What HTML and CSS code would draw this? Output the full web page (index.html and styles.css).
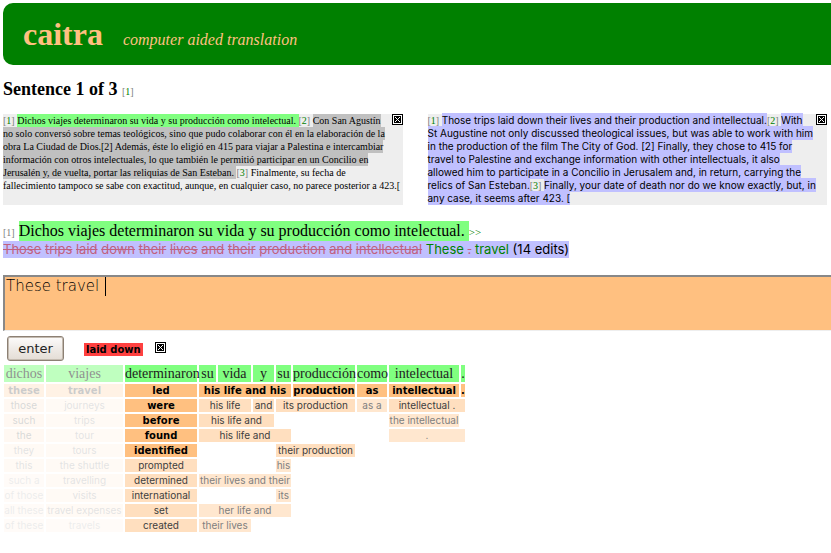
FILE: index.html
```html
<!DOCTYPE html>
<html lang="en">
<head>
<meta charset="utf-8">
<title>caitra - computer aided translation</title>
<link rel="stylesheet" href="styles.css">
</head>
<body>
<svg class="defs" aria-hidden="true">
  <symbol id="close" viewBox="0 0 11 11">
    <rect width="11" height="11" fill="#000"/>
    <rect x="1" y="1" width="9" height="9" fill="#fff"/>
    <rect x="2" y="2" width="7" height="7" fill="#000"/>
    <path d="M3 3h1v1h1v1h1v-1h1v-1h1v1h-1v1h-1v1h1v1h1v1h-1v-1h-1v-1h-1v1h-1v1h-1v-1h1v-1h1v-1h-1v-1h-1z" fill="#fff"/>
  </symbol>
</svg>
<header class="banner">
  <h1>caitra</h1>
  <p>computer aided translation</p>
</header>
<main>
  <h2>Sentence 1 of 3 <small>[<a href="#s1">1</a>]</small></h2>

  <div class="context">
    <section class="pane source">
      <button class="close" aria-label="Close source"><svg><use href="#close"/></svg></button>
      <p><span class="ref">[<a href="#s1">1</a>] </span><span class="current">Dichos viajes determinaron su vida y su producción como intelectual. </span><span class="ref"> [<a href="#s2">2</a>] </span><span class="other">Con San Agustín<br>no solo conversó sobre temas teológicos, sino que pudo colaborar con él en la elaboración de la<br>obra La Ciudad de Dios.[2] Además, éste lo eligió en 415 para viajar a Palestina e intercambiar<br>información con otros intelectuales, lo que también le permitió participar en un Concilio en<br>Jerusalén y, de vuelta, portar las reliquias de San Esteban. </span><span class="ref"> [<a href="#s3">3</a>] </span>Finalmente, su fecha de<br>fallecimiento tampoco se sabe con exactitud, aunque, en cualquier caso, no parece posterior a 423.[</p>
    </section>
    <section class="pane target">
      <button class="close" aria-label="Close translation"><svg><use href="#close"/></svg></button>
      <p><span class="ref">[<a href="#s1">1</a>] </span><span class="draft">Those trips laid down their lives and their production and intellectual.</span><span class="ref">[<a href="#s2">2</a>] </span><span class="draft">With<br>St Augustine not only discussed theological issues, but was able to work with him<br>in the production of the film The City of God. [2] Finally, they chose to 415 for<br>travel to Palestine and exchange information with other intellectuals, it also<br>allowed him to participate in a Concilio in Jerusalem and, in return, carrying the<br>relics of San Esteban.</span><span class="ref">[<a href="#s3">3</a>] </span><span class="draft">Finally, your date of death nor do we know exactly, but, in<br>any case, it seems after 423. [</span></p>
    </section>
  </div>

  <p class="sentence"><small>[1]</small> <span>Dichos viajes determinaron su vida y su producción como intelectual. </span><a href="#s2">&gt;&gt;</a></p>
  <p class="edits"><span><del>Those</del> <del>trips</del> <del>laid</del> <del>down</del> <del>their</del> <del>lives</del> <del>and</del> <del>their</del> <del>production</del> <del>and</del> <del>intellectual</del> <ins>These</ins> <del>.</del> <ins>travel</ins> (14 edits)</span></p>

  <div class="entry">
    <textarea aria-label="Translation" spellcheck="false">These travel </textarea>
    <i class="caret"></i>
  </div>

  <div class="actions">
    <button class="enter">enter</button>
    <mark>laid down</mark>
    <button class="close" aria-label="Dismiss suggestion"><svg><use href="#close"/></svg></button>
  </div>

  <table class="options">
    <colgroup><col class="c40"><col class="c77"><col class="c72"><col class="c17"><col class="c33"><col class="c21"><col class="c15"><col class="c62"><col class="c30"><col class="c70"><col class="c4"></colgroup>
    <thead>
      <tr><th class="done">dichos</th><th class="done">viajes</th><th>determinaron</th><th>su</th><th>vida</th><th>y</th><th>su</th><th>producción</th><th>como</th><th>intelectual</th><th>.</th></tr>
    </thead>
    <tbody>
      <tr><td class="best f1">these</td><td class="best f1">travel</td><td class="best">led</td><td class="best" colspan="4">his life and his</td><td class="best">production</td><td class="best">as</td><td class="best">intellectual</td><td class="best">.</td></tr>
      <tr><td class="good f1">those</td><td class="good f2">journeys</td><td class="best">were</td><td class="good" colspan="2">his life</td><td class="good">and</td><td class="good" colspan="2">its production</td><td class="fair">as a</td><td class="good" colspan="2">intellectual .</td></tr>
      <tr><td class="good f1">such</td><td class="good f2">trips</td><td class="best">before</td><td class="good" colspan="3">his life and</td><td colspan="3"></td><td class="fair">the intellectual</td><td></td></tr>
      <tr><td class="good f1">the</td><td class="good f2">tour</td><td class="best">found</td><td class="good" colspan="4">his life and</td><td colspan="2"></td><td class="fair" colspan="2">.</td></tr>
      <tr><td class="good f2">they</td><td class="good f2">tours</td><td class="best">identified</td><td colspan="3"></td><td class="good" colspan="2">their production</td><td colspan="3"></td></tr>
      <tr><td class="good f2">this</td><td class="good f2">the shuttle</td><td class="good">prompted</td><td colspan="3"></td><td class="fair">his</td><td colspan="4"></td></tr>
      <tr><td class="fair f2">such a</td><td class="good f2">travelling</td><td class="good">determined</td><td class="fair" colspan="4">their lives and their</td><td colspan="4"></td></tr>
      <tr><td class="fair f2">of those</td><td class="good f2">visits</td><td class="good">international</td><td colspan="3"></td><td class="fair">its</td><td colspan="4"></td></tr>
      <tr><td class="fair f2">all these</td><td class="good f2">travel expenses</td><td class="good">set</td><td class="fair" colspan="4">her life and</td><td colspan="4"></td></tr>
      <tr><td class="fair f2">of these</td><td class="fair f2">travels</td><td class="good">created</td><td class="fair" colspan="2">their lives</td><td colspan="6"></td></tr>
    </tbody>
  </table>
</main>
</body>
</html>
```

FILE: styles.css
```css
* { box-sizing: border-box; }
body {
  margin: 3px 0 0 3px;
  background: #fff;
  color: #000;
  font-family: "Liberation Serif", serif;
}
h1, h2, p { margin: 0; }
a { color: #008000; text-decoration: none; }
small, .ref { color: #808080; }
.defs { display: none; }

.banner {
  display: flex;
  align-items: baseline;
  gap: 20px;
  padding: 12px 20px;
  height: 62px;
  background: #008000;
  border-radius: 10px 0 0 10px;
  color: #ffc080;
}
.banner h1 { font-size: 32px; line-height: 38px; }
.banner p { font-size: 16px; font-style: italic; }

h2 { margin-top: 14px; font-size: 18px; line-height: 20px; }
h2 small { font-size: 10px; font-weight: normal; }

.context {
  display: grid;
  grid-template-columns: minmax(0, 1fr) minmax(0, 1fr);
  gap: 25px;
  margin: 12px 4px 0 0;
}
.pane {
  position: relative;
  height: 91px;
  background: #eee;
  font-size: 10px;
  line-height: 13px;
  white-space: nowrap;
}
.pane .close { position: absolute; top: 0; right: 0; }
.pane span { padding: 1px 0; }
.target { font-family: Inter, sans-serif; }
.target .ref { font-family: "Liberation Serif", serif; background: #eee; }
.current { background: #80ff80; }
.other { background: #c0c0c0; }
.draft { background: #c0c0ff; }

.close {
  display: block;
  width: 11px;
  height: 11px;
  padding: 0;
  border: 0;
  background: none;
}
.close svg { display: block; width: 11px; height: 11px; }

.sentence {
  height: 20px;
  margin-top: 16px;
  font-size: 16px;
  line-height: 20px;
  white-space: nowrap;
}
.sentence span { display: inline-block; background: #80ff80; white-space: pre; }
.sentence small { font-size: 10px; }
.sentence a { font-size: 11px; }
.edits {
  height: 17px;
  font: 13px/17px Inter, sans-serif;
  white-space: nowrap;
}
.edits span { display: inline-block; background: #c0c0ff; }
.edits del { color: #c06080; }
.edits ins { color: #008000; text-decoration: none; }

.entry { position: relative; margin-top: 17px; }
.entry textarea {
  display: block;
  width: 100%;
  height: 56px;
  padding: 0 1px;
  border: 2px solid #888;
  border-right: 0;
  border-bottom: 1px solid #eee;
  border-radius: 0;
  background: #ffc080;
  color: #000;
  font: 200 15px/19px "DejaVu Sans Light", "DejaVu Sans", sans-serif;
  resize: none;
  outline: 0;
}
.caret {
  position: absolute;
  left: 102px;
  top: 2px;
  width: 1px;
  height: 19px;
  background: #000;
}

.actions { display: flex; align-items: flex-start; padding: 5px 0 0 4px; height: 32px; }
.enter {
  width: 57px;
  height: 25px;
  padding: 0;
  border: 1px solid #8c8074;
  border-radius: 3px;
  background: linear-gradient(#fdfcfb, #efebe7 50%, #e4ddd5);
  box-shadow: inset 0 0 0 1px #c4bbb0;
  color: #222;
  font: 13px/20px "DejaVu Sans", sans-serif;
}
.actions mark {
  margin: 7px 12px 0 20px;
  padding: 0 2px;
  background: #ff4040;
  font: bold 10px/13px "DejaVu Sans", sans-serif;
}
.actions .close { margin-top: 6px; }

.options {
  table-layout: fixed;
  width: 465px;
  margin-left: -1px;
  border-spacing: 2px;
  font: 10px/13px Inter, sans-serif;
  text-align: center;
  white-space: nowrap;
}
.options th {
  height: 17px;
  padding: 0;
  background: #80ff80;
  color: #222;
  font: 14px/17px "Liberation Serif", serif;
}
.options td { height: 13px; padding: 0; }
.options .done { opacity: 0.5; }
.options .best {
  background: #ffc080;
  font-family: "DejaVu Sans", sans-serif;
  font-weight: bold;
}
.options .good { background: #ffdfbf; color: #404040; }
.options .fair { background: #ffe7cf; color: #808080; }
.options .f1 { opacity: 0.2; }
.options .f2 { opacity: 0.14; }
.c40 { width: 40px; }
.c77 { width: 77px; }
.c72 { width: 72px; }
.c17 { width: 17px; }
.c33 { width: 33px; }
.c21 { width: 21px; }
.c15 { width: 15px; }
.c62 { width: 62px; }
.c30 { width: 30px; }
.c70 { width: 70px; }
.c4 { width: 4px; }
```
